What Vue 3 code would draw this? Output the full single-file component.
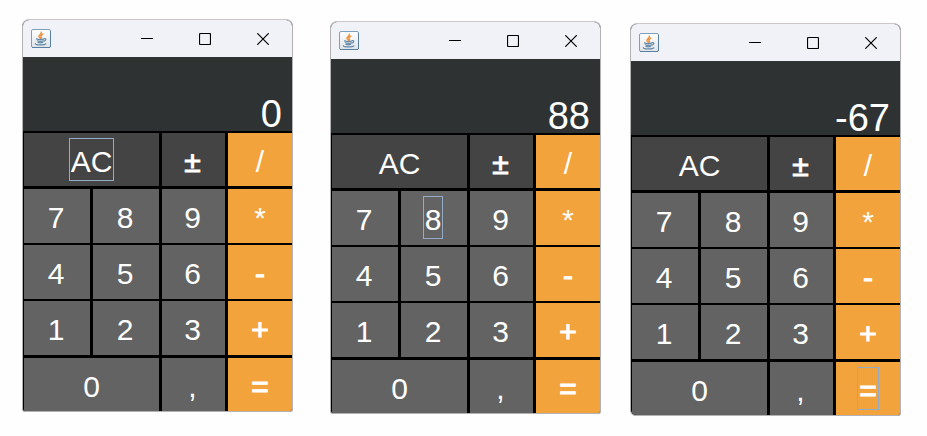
<script setup>
import { ref } from 'vue'

const keys = [
  { label: 'AC', kind: 'dark', wide: true, row: 'first' },
  { label: '±', kind: 'dark', row: 'first', heavy: true },
  { label: '/', kind: 'operator', row: 'first' },
  { label: '7' }, { label: '8' }, { label: '9' }, { label: '*', kind: 'operator' },
  { label: '4' }, { label: '5' }, { label: '6' }, { label: '-', kind: 'operator', heavy: true },
  { label: '1' }, { label: '2' }, { label: '3' }, { label: '+', kind: 'operator', heavy: true },
  { label: '0', wide: true, row: 'last' },
  { label: ',', row: 'last' },
  { label: '=', kind: 'operator', row: 'last', heavy: true },
]

const calculators = ref([
  { id: 'first', value: '0', active: 'AC' },
  { id: 'second', value: '88', active: '8' },
  { id: 'third', value: '-67', active: '=' },
])
</script>

<template>
  <main class="desk">
    <section v-for="calc in calculators" :key="calc.id" class="window" :class="calc.id">
      <header class="titlebar">
        <svg class="app-icon" viewBox="0 0 20 19" aria-hidden="true">
          <defs>
            <linearGradient :id="'tile-' + calc.id" x1="0" y1="0" x2="0" y2="1">
              <stop offset="0" stop-color="#ffffff" />
              <stop offset="1" stop-color="#dfe4e8" />
            </linearGradient>
          </defs>
          <rect x="0.5" y="0.5" width="19" height="18" rx="1.5" :fill="`url(#tile-${calc.id})`" stroke="#7ba0bd" />
          <path d="M1 18.5h18M19.5 2v16" stroke="#587f9f" fill="none" />
          <path d="M10.3 3.2c1.2 1.8-3 2.800-2.300 4.400.3.800 1 1.100 1.300 1.600M11.800 5.300c-2 .9-2.300 1.700-1.500 2.700.4.6.1 1-.3 1.400" fill="none" stroke="#ee963f" stroke-width="1.500" stroke-linecap="round" />
          <path d="M5.500 9.900c2 .7 5.500.7 7.500 0M6.300 11.800c1.800.7 4.500.7 6 0M7 13.400c1.500.5 3.400.5 4.700 0M13.200 9.700c2.200-.5 2.200 1.900-.4 2.500M4.300 14.700c-.3 1.500 9.500 1.500 10.500.1" fill="none" stroke="#6489a9" stroke-width="1.200" stroke-linecap="round" />
        </svg>
        <div class="controls">
          <button type="button" aria-label="Minimize">
            <svg viewBox="0 0 12 12"><path d="M0 5.500h12" /></svg>
          </button>
          <button type="button" aria-label="Maximize">
            <svg viewBox="0 0 12 12"><rect x="0.5" y="0.5" width="11" height="11" rx="1" /></svg>
          </button>
          <button type="button" aria-label="Close">
            <svg viewBox="0 0 12 12"><path d="M0.300 0.300l11.400 11.400M11.700 0.300L0.300 11.700" /></svg>
          </button>
        </div>
      </header>
      <output class="display">{{ calc.value }}</output>
      <div class="keypad">
        <button
          v-for="key in keys"
          :key="key.label"
          type="button"
          class="key"
          :class="[key.kind, key.row && `${key.row}-row`, { wide: key.wide, heavy: key.heavy, active: key.label === calc.active }]"
          @click="calc.active = key.label"
        >
          <span class="label">{{ key.label }}</span>
        </button>
      </div>
    </section>
  </main>
</template>

<style>
body {
  margin: 0;
  background: #fefefe;
}
</style>

<style scoped>
.desk {
  display: flex;
  align-items: flex-start;
  padding: 19px 26px 19px 22px;
  font-family: "Liberation Sans", Arial, sans-serif;
}

.window {
  flex: 1;
  min-width: 0;
  box-sizing: border-box;
  overflow: hidden;
  border: 1px solid #b4b1b4;
  border-top-color: #cbc7cb;
  border-radius: 7px 7px 3px 3px;
  background: #000;
}

.second {
  margin: 2px 0 0 37px;
}

.third {
  margin: 4px 0 0 29px;
  border-radius: 7px 7px 3px 6px;
}

.titlebar {
  display: flex;
  align-items: center;
  justify-content: space-between;
  height: 37px;
  padding-left: 8px;
  background: #f1f2f8;
}

.app-icon {
  width: 20px;
  height: 19px;
}

.controls {
  display: flex;
  height: 100%;
}

.controls button {
  display: grid;
  place-items: center;
  width: 58px;
  padding: 0;
  border: 0;
  background: none;
}

.controls svg {
  width: 12px;
  height: 12px;
  fill: none;
  stroke: #000;
  stroke-width: 1.2;
}

.display {
  display: flex;
  align-items: flex-end;
  justify-content: flex-end;
  box-sizing: border-box;
  height: 74px;
  padding-right: 10px;
  background: #2e3233;
  color: #fff;
  font-size: 38px;
  line-height: 34px;
}

.keypad {
  display: grid;
  grid-template-columns: 66fr 66fr 63fr 64fr;
  grid-auto-rows: 54px;
  gap: 2px 3px;
  padding: 2px 0 0 1px;
}

.key {
  display: flex;
  align-items: flex-start;
  justify-content: center;
  min-width: 0;
  padding: 5px 2px 0 0;
  border: 0;
  background: #636363;
  color: #fff;
  font-family: inherit;
  font-size: 30px;
  outline: none;
}

.dark {
  background: #444;
}

.operator {
  padding-right: 0;
  background: #f2a33c;
}

.wide {
  grid-column: span 2;
  padding-right: 0;
}

.heavy {
  -webkit-text-stroke: 1px #fff;
}

.first-row {
  margin-bottom: 1px;
}

.last-row {
  margin-top: 1px;
}

.label {
  padding: 5px 1px 0;
  border: 1px solid transparent;
  line-height: 36px;
}

.active .label {
  border-color: #93abc5;
}
</style>
